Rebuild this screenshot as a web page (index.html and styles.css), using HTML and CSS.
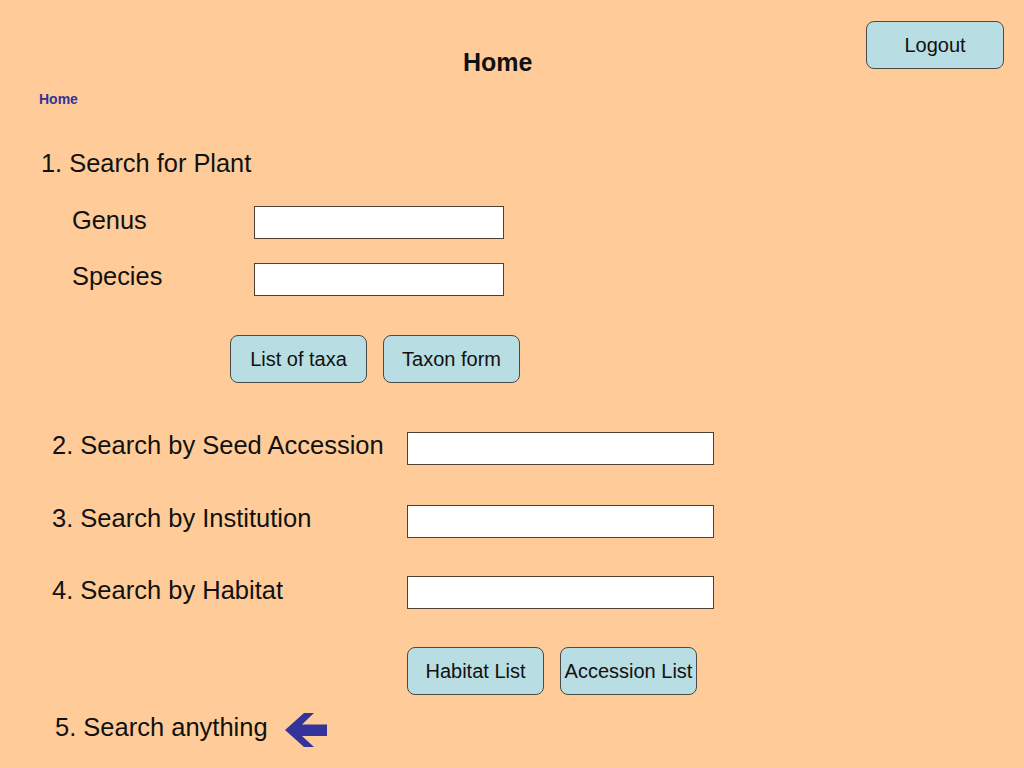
FILE: index.html
```html
<!DOCTYPE html>
<html lang="en">
<head>
<meta charset="utf-8">
<title>Home</title>
<link rel="stylesheet" href="styles.css">
</head>
<body>
<div class="page">
  <header class="header">
    <h1 class="title">Home</h1>
    <button class="btn btn-logout" type="button">Logout</button>
  </header>
  <nav class="crumbs"><a href="#">Home</a></nav>

  <section class="plant">
    <h2 class="heading">1. Search for Plant</h2>
    <div class="field-row first">
      <label class="field-label">Genus</label>
      <input class="box box-small" type="text">
    </div>
    <div class="field-row">
      <label class="field-label species">Species</label>
      <input class="box box-small" type="text">
    </div>
    <div class="btn-row taxa">
      <button class="btn" type="button">List of taxa</button>
      <button class="btn" type="button">Taxon form</button>
    </div>
  </section>

  <section class="searches">
    <div class="search-row seed">
      <label class="search-label">2. Search by Seed Accession</label>
      <input class="box box-wide" type="text">
    </div>
    <div class="search-row inst">
      <label class="search-label">3. Search by Institution</label>
      <input class="box box-wide" type="text">
    </div>
    <div class="search-row habitat">
      <label class="search-label l4">4. Search by Habitat</label>
      <input class="box box-wide" type="text">
    </div>
    <div class="btn-row lists">
      <button class="btn" type="button">Habitat List</button>
      <button class="btn" type="button">Accession List</button>
    </div>
  </section>

  <div class="anything">
    <span class="anything-label">5. Search anything</span>
    <svg class="arrow" width="42" height="34" viewBox="0 0 42 34" aria-hidden="true">
      <polygon points="0,17 19,0 29,0 17,11.5 42,11.5 42,23 17,23 29,34 19,34" fill="#333399"/>
    </svg>
  </div>
</div>
</body>
</html>
```

FILE: styles.css
```css
html, body {
  margin: 0;
  padding: 0;
  background: #ffcc99;
}

body {
  font-family: "Liberation Sans", Arial, sans-serif;
  color: #111;
  width: 1024px;
  height: 768px;
  overflow: hidden;
}

.page {
  display: flex;
  flex-direction: column;
}

.header {
  display: flex;
  align-items: flex-start;
  padding: 21px 20px 0 0;
}

.title {
  margin: 26px 0 0 463px;
  font-size: 25px;
  line-height: 30px;
  font-weight: bold;
}

.btn {
  width: 137px;
  height: 48px;
  box-sizing: border-box;
  background: #b8dde2;
  border: 1px solid #4a4a4a;
  border-radius: 8px;
  font-family: "Liberation Sans", Arial, sans-serif;
  font-size: 20px;
  color: #111;
  padding: 0;
  white-space: nowrap;
}

.btn-logout {
  width: 138px;
  margin-left: auto;
}

.crumbs {
  margin-top: 14px;
  padding-left: 39px;
  line-height: 16px;
}

.crumbs a {
  font-size: 14px;
  font-weight: bold;
  color: #333399;
  text-decoration: none;
}

.plant {
  display: flex;
  flex-direction: column;
}

.heading {
  margin: 41px 0 0 41px;
  font-size: 25.4px;
  line-height: 30px;
  font-weight: normal;
}

.field-row {
  display: flex;
  align-items: flex-start;
  padding-left: 72px;
  margin-top: 24px;
  height: 33px;
}

.field-row.first {
  margin-top: 28px;
}

.field-label {
  width: 182px;
  font-size: 25.4px;
  line-height: 28px;
}

.field-label.species {
  line-height: 26px;
}

.box {
  height: 33px;
  box-sizing: border-box;
  border: 1px solid #4d4136;
  background: #fff;
  margin: 0;
  padding: 0 4px;
  font-size: 16px;
}

.box-small {
  width: 250px;
}

.box-wide {
  width: 307px;
}

.btn-row {
  display: flex;
  gap: 16px;
}

.btn-row.taxa {
  margin: 39px 0 0 230px;
}

.searches {
  display: flex;
  flex-direction: column;
}

.search-row {
  display: flex;
  align-items: flex-start;
  padding-left: 52px;
  height: 33px;
}

.search-row.seed {
  margin-top: 49px;
}

.search-row.inst {
  margin-top: 40px;
}

.search-row.habitat {
  margin-top: 38px;
}

.search-label {
  width: 355px;
  font-size: 25.5px;
  line-height: 26px;
  white-space: nowrap;
}

.search-label.l4 {
  line-height: 28px;
}

.btn-row.lists {
  margin: 38px 0 0 407px;
}

.anything {
  display: flex;
  align-items: flex-start;
  margin: 17px 0 0 55px;
}

.anything-label {
  font-size: 25.5px;
  line-height: 30px;
}

.arrow {
  margin: 1px 0 0 17px;
  display: block;
}
```
